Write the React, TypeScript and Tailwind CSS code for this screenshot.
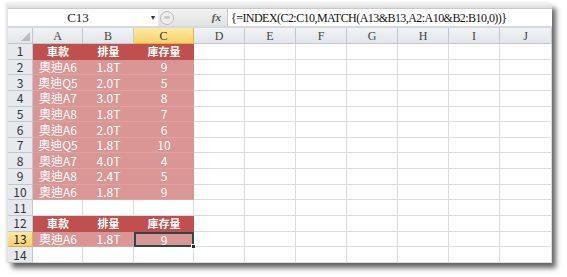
import React from "react";

type Kind = "head" | "data" | "blank";

interface Row {
  kind: Kind;
  cells: string[];
}

const COLS = ["A", "B", "C", "D", "E", "F", "G", "H", "I", "J"];

const ROWS: Row[] = [
  { kind: "head", cells: ["車款", "排量", "庫存量"] },
  { kind: "data", cells: ["奧迪A6", "1.8T", "9"] },
  { kind: "data", cells: ["奧迪Q5", "2.0T", "5"] },
  { kind: "data", cells: ["奧迪A7", "3.0T", "8"] },
  { kind: "data", cells: ["奧迪A8", "1.8T", "7"] },
  { kind: "data", cells: ["奧迪A6", "2.0T", "6"] },
  { kind: "data", cells: ["奧迪Q5", "1.8T", "10"] },
  { kind: "data", cells: ["奧迪A7", "4.0T", "4"] },
  { kind: "data", cells: ["奧迪A8", "2.4T", "5"] },
  { kind: "data", cells: ["奧迪A6", "1.8T", "9"] },
  { kind: "blank", cells: [] },
  { kind: "head", cells: ["車款", "排量", "庫存量"] },
  { kind: "data", cells: ["奧迪A6", "1.8T", "9"] },
  { kind: "blank", cells: [] },
];

const cellFont = { fontFamily: '"Noto Sans CJK TC", "Noto Sans", sans-serif' };
const serifFont = { fontFamily: '"Liberation Serif", serif' };

const App: React.FC = () => {
  return (
    <div className="h-[277px] w-[567px] overflow-hidden bg-white">
      <div className="ml-[8px] mt-[3px] flex w-[544px] flex-col bg-[#e4e7eb] shadow-[4px_5px_5px_rgba(0,0,0,0.6),-2px_0_3px_rgba(0,0,0,0.12)]">
        {/* frame band above formula bar */}
        <div className="h-[5px] bg-gradient-to-b from-[#f4f4f4] to-[#dcdcdc]" />

        {/* Formula bar */}
        <div className="flex h-[18px] items-stretch border-t border-[#c9c9c9] bg-[#e8e8e8] leading-none">
          <div
            className="flex w-[140px] items-center justify-center bg-white text-[13px] text-[#222]"
            style={serifFont}
          >
            C13
          </div>
          <div className="flex w-[10px] items-center justify-center bg-white text-[7px] text-[#333]">
            ▼
          </div>
          <div className="flex w-[69px] items-center bg-gradient-to-b from-[#f2f2f2] to-[#e2e2e2]">
            <div className="ml-[2px] flex h-[14px] w-[14px] items-center justify-center rounded-full border border-[#b9bcc0] bg-[#eceef0]">
              <div className="h-[3px] w-[6px] rounded-full bg-[#c9ccd0]" />
            </div>
            <span
              className="ml-auto mr-[6px] text-[11px] font-bold italic text-[#555]"
              style={serifFont}
            >
              fx
            </span>
          </div>
          <div
            className="flex flex-1 items-center border-l border-[#c9c9c9] bg-white pl-[3px] text-[12px] tracking-[-0.55px] text-[#111]"
            style={serifFont}
          >
            {"{=INDEX(C2:C10,MATCH(A13&B13,A2:A10&B2:B10,0))}"}
          </div>
        </div>

        <div className="h-[2px] bg-[#d5d9de]" />

        {/* Sheet grid */}
        <div className="grid grid-cols-[25px_50px_51px_60px_51px_51px_51px_51px_51px_51px_52px] bg-white leading-none">
          {/* select-all corner */}
          <div className="relative h-[16px] border-b border-r border-[#c3c8ce] bg-gradient-to-b from-[#f1f3f5] to-[#e2e6ea]">
            <div className="absolute bottom-[2px] right-[2px] h-0 w-0 border-b-[9px] border-l-[9px] border-b-[#b8bcc2] border-l-transparent" />
          </div>
          {COLS.map((c) => (
            <div
              key={c}
              className={
                c === "C"
                  ? "flex h-[16px] items-center justify-center border-b border-r border-[#e2b443] bg-gradient-to-b from-[#fce9a5] to-[#f8d267] text-[12px] text-[#333]"
                  : "flex h-[16px] items-center justify-center border-b border-r border-[#c3c8ce] bg-gradient-to-b from-[#f1f3f5] to-[#e2e6ea] text-[12px] text-[#444]"
              }
              style={serifFont}
            >
              {c}
            </div>
          ))}

          {ROWS.map((row, ri) => {
            const n = ri + 1;
            const sel = n === 13;
            return (
              <React.Fragment key={n}>
                <div
                  className={
                    sel
                      ? "flex h-[15.65px] items-center justify-center border-b border-r border-[#e2b443] bg-gradient-to-b from-[#fce9a5] to-[#f8d267] text-[12px] text-[#222]"
                      : "flex h-[15.65px] items-center justify-center border-b border-r border-[#c3c8ce] bg-[#e6e9ed] text-[12px] text-[#333]"
                  }
                  style={cellFont}
                >
                  {n}
                </div>
                {COLS.map((c, ci) => {
                  const text = ci < 3 ? row.cells[ci] : undefined;
                  if (ci < 3 && row.kind === "head") {
                    return (
                      <div
                        key={c}
                        className="flex h-[15.65px] items-center justify-center bg-[#c0504d] text-[11px] font-bold text-white"
                        style={cellFont}
                      >
                        {text}
                      </div>
                    );
                  }
                  if (ci < 3 && row.kind === "data") {
                    const active = sel && c === "C";
                    return (
                      <div
                        key={c}
                        className={
                          active
                            ? "relative flex h-[15.65px] items-center justify-center border-2 border-[#2b4a44] bg-[#d99694] text-[12px] text-white"
                            : "flex h-[15.65px] items-center justify-center border-b border-[#dea2a0] bg-[#d99694] text-[12px] text-white"
                        }
                        style={cellFont}
                      >
                        {text}
                        {active && (
                          <div className="absolute -bottom-[4px] -right-[4px] h-[5px] w-[5px] border border-white bg-[#1f2f2c]" />
                        )}
                      </div>
                    );
                  }
                  return (
                    <div
                      key={c}
                      className="h-[15.65px] border-b border-r border-[#dadcdf] bg-white"
                    />
                  );
                })}
              </React.Fragment>
            );
          })}
        </div>
      </div>
    </div>
  );
};

export default App;
